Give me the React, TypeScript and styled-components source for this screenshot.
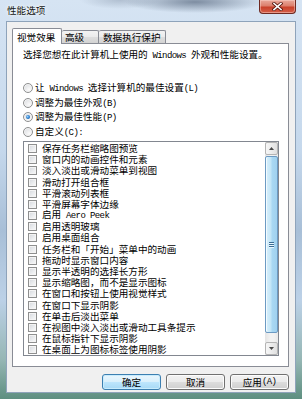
import React from "react";
import styled, { createGlobalStyle } from "styled-components";

const GlobalStyle = createGlobalStyle`
  html, body { margin: 0; padding: 0; }
  body { width: 302px; height: 399px; overflow: hidden; background: #bcd2ea; }
  * { box-sizing: border-box; }
`;

const Window = styled.div`
  width: 302px;
  height: 399px;
  display: flex;
  flex-direction: column;
  padding: 0 6px 6px 6px;
  font-family: "Noto Sans CJK SC", sans-serif;
  font-size: 9.6px;
  color: #000;
  background:
    radial-gradient(ellipse 70px 11px at 195px 2px, rgba(96, 112, 134, 0.75), rgba(96, 112, 134, 0)),
    radial-gradient(ellipse 40px 9px at 120px 0px, rgba(140, 155, 175, 0.5), rgba(140, 155, 175, 0)),
    linear-gradient(
      to bottom,
      #d6e4f3 0px,
      #c5d8ec 150px,
      #a8bfd7 230px,
      #bcd1e7 300px,
      #95b6b4 360px,
      #5e8f80 399px
    );
`;

const TitleBar = styled.div`
  height: 21px;
  flex: none;
  display: flex;
  justify-content: space-between;
  align-items: flex-start;
`;

const Title = styled.div`
  margin-top: 4px;
  padding-left: 1px;
  line-height: 12px;
  color: #141414;
  text-shadow: 0 0 5px rgba(255, 255, 255, 0.9), 0 0 2px rgba(255, 255, 255, 0.9);
`;

const CloseButton = styled.div`
  width: 37px;
  height: 14px;
  border: 1px solid #6e2a22;
  border-top: none;
  border-radius: 0 0 4px 4px;
  background: linear-gradient(to bottom, #e9a99b 0%, #dc7f6c 45%, #c9412a 55%, #d4604a 100%);
  box-shadow: inset 0 0 0 1px rgba(255, 220, 210, 0.45);
  display: flex;
  align-items: center;
  justify-content: center;
`;

const Client = styled.div`
  flex: 1;
  background: #f0f0f0;
  border: 1px solid #8ea3ba;
  display: flex;
  flex-direction: column;
  padding: 6px 0 0 5px;
`;

const TabStrip = styled.div`
  display: flex;
  height: 16px;
  margin-bottom: -1px;
  position: relative;
  z-index: 1;
`;

const Tab = styled.div<{ $active?: boolean; $w: number; $pl: number; $noLeft?: boolean }>`
  width: ${(p) => p.$w}px;
  padding-left: ${(p) => p.$pl}px;
  display: flex;
  align-items: center;
  white-space: nowrap;
  border: 1px solid #898c95;
  border-bottom: none;
  border-left-width: ${(p) => (p.$noLeft ? 0 : 1)}px;
  border-radius: 2px 2px 0 0;
  height: ${(p) => (p.$active ? 16 : 13)}px;
  margin-top: ${(p) => (p.$active ? 0 : 2)}px;
  background: ${(p) =>
    p.$active
      ? "#ffffff"
      : "linear-gradient(to bottom, #f3f3f3 0%, #ebebeb 50%, #dedede 50%, #d3d3d3 100%)"};
  line-height: 12px;
`;

const Panel = styled.div`
  width: 277px;
  height: 324px;
  border: 1px solid #898c95;
  background: #ffffff;
  display: flex;
  flex-direction: column;
  padding: 4px 0 0 10px;
`;

const Description = styled.div`
  height: 12px;
  line-height: 12px;
  white-space: nowrap;
`;

const Lat = styled.span`
  font-family: "Liberation Mono", monospace;
  font-size: 9px;
  letter-spacing: -0.6px;
`;

const RadioGroup = styled.div`
  margin-top: 21px;
  display: flex;
  flex-direction: column;
`;

const RadioRow = styled.div`
  height: 14.6px;
  display: flex;
  align-items: center;
  gap: 2px;
  line-height: 12px;
  white-space: nowrap;
`;

const RadioCircle = styled.span<{ $checked?: boolean }>`
  width: 10px;
  height: 10px;
  flex: none;
  border-radius: 50%;
  border: 1px solid #8e8f8f;
  background: radial-gradient(circle at 65% 70%, #fbfbfb 0%, #e6e7e9 55%, #c9ccd1 100%);
  box-shadow: inset 0 0 0 1px #f6f6f6;
  display: flex;
  align-items: center;
  justify-content: center;
  &::after {
    content: "";
    display: ${(p) => (p.$checked ? "block" : "none")};
    width: 4px;
    height: 4px;
    border-radius: 50%;
    background: radial-gradient(circle at 40% 40%, #9fd6ff 0%, #2a7fcf 50%, #164f8a 100%);
  }
`;

const ListBox = styled.div`
  margin-top: 2px;
  width: 256px;
  height: 215px;
  border: 1px solid #828790;
  background: #fff;
  display: flex;
`;

const Items = styled.div`
  flex: 1;
  display: flex;
  flex-direction: column;
  padding: 0.5px 0 0 4px;
`;

const ItemRow = styled.div`
  height: 11.2px;
  display: flex;
  align-items: center;
  gap: 5px;
  line-height: 11px;
  white-space: nowrap;
`;

const CheckBox = styled.span`
  width: 9px;
  height: 9px;
  flex: none;
  border: 1px solid #8e8f8f;
  background: linear-gradient(135deg, #d4d7dc 0%, #eceef0 60%, #fafafa 100%);
  box-shadow: inset 0 0 0 1px #f4f4f4;
`;

const ScrollBar = styled.div`
  width: 13px;
  flex: none;
  display: flex;
  flex-direction: column;
  background: linear-gradient(to right, #e4e4e4, #f2f2f2 40%, #f2f2f2 70%, #e8e8e8);
`;

const ArrowButton = styled.div`
  height: 13px;
  flex: none;
  border: 1px solid #b4b4b4;
  border-radius: 2px;
  background: linear-gradient(to right, #f7f7f7 0%, #ececec 50%, #e0e0e0 100%);
  display: flex;
  align-items: center;
  justify-content: center;
`;

const Track = styled.div`
  flex: 1;
  display: flex;
  flex-direction: column;
`;

const Thumb = styled.div`
  margin-top: 1px;
  height: 177px;
  border: 1px solid #6c9ac3;
  border-radius: 2px;
  background: linear-gradient(to right, #d9f0fc 0%, #c2e5f7 45%, #a9d8f3 55%, #a0d1ef 100%);
  box-shadow: inset 1px 0 0 #f2fbff;
  display: flex;
  align-items: center;
  justify-content: center;
`;

const Grip = styled.div`
  width: 5px;
  display: flex;
  flex-direction: column;
  gap: 1px;
  & > span {
    display: block;
    height: 1px;
    background: #3a6d96;
    box-shadow: 0 1px 0 #e9f6fd;
  }
`;

const ButtonRow = styled.div`
  width: 277px;
  margin-top: 7px;
  display: flex;
  justify-content: flex-end;
  gap: 5px;
`;

const Button = styled.div<{ $default?: boolean }>`
  width: 59px;
  height: 16px;
  border: 1px solid ${(p) => (p.$default ? "#3c7fb1" : "#707070")};
  border-radius: 3px;
  background: ${(p) =>
    p.$default
      ? "linear-gradient(to bottom, #eaf6fd 0%, #d9f0fc 50%, #bee6fd 50%, #a7d9f5 100%)"
      : "linear-gradient(to bottom, #f2f2f2 0%, #ebebeb 50%, #dddddd 50%, #cfcfcf 100%)"};
  box-shadow: inset 0 0 0 1px ${(p) => (p.$default ? "#c8ecfd" : "#fcfcfc")};
  display: flex;
  align-items: center;
  justify-content: center;
  line-height: 12px;
  white-space: nowrap;
`;

const items: React.ReactNode[] = [
  "保存任务栏缩略图预览",
  "窗口内的动画控件和元素",
  "淡入淡出或滑动菜单到视图",
  "滑动打开组合框",
  "平滑滚动列表框",
  "平滑屏幕字体边缘",
  <>
    启用<Lat> Aero Peek</Lat>
  </>,
  "启用透明玻璃",
  "启用桌面组合",
  "任务栏和「开始」菜单中的动画",
  "拖动时显示窗口内容",
  "显示半透明的选择长方形",
  "显示缩略图，而不是显示图标",
  "在窗口和按钮上使用视觉样式",
  "在窗口下显示阴影",
  "在单击后淡出菜单",
  "在视图中淡入淡出或滑动工具条提示",
  "在鼠标指针下显示阴影",
  "在桌面上为图标标签使用阴影",
];

export default function App() {
  return (
    <>
      <GlobalStyle />
      <Window>
        <TitleBar>
          <Title>性能选项</Title>
          <CloseButton>
            <svg width="11" height="9" viewBox="0 0 11 9">
              <path d="M2 1.5 L9 7.5 M9 1.5 L2 7.5" stroke="#5a1a12" strokeWidth="3.2" strokeLinecap="square" />
              <path d="M2 1.5 L9 7.5 M9 1.5 L2 7.5" stroke="#ffffff" strokeWidth="1.6" strokeLinecap="square" />
            </svg>
          </CloseButton>
        </TitleBar>
        <Client>
          <TabStrip>
            <Tab $active $w={50} $pl={4}>视觉效果</Tab>
            <Tab $w={37} $pl={3} $noLeft>高级</Tab>
            <Tab $w={67} $pl={4} $noLeft>数据执行保护</Tab>
          </TabStrip>
          <Panel>
            <Description>
              选择您想在此计算机上使用的<Lat> Windows </Lat>外观和性能设置。
            </Description>
            <RadioGroup>
              <RadioRow>
                <RadioCircle />
                <span>
                  让<Lat> Windows </Lat>选择计算机的最佳设置<Lat>(L)</Lat>
                </span>
              </RadioRow>
              <RadioRow>
                <RadioCircle />
                <span>
                  调整为最佳外观<Lat>(B)</Lat>
                </span>
              </RadioRow>
              <RadioRow>
                <RadioCircle $checked />
                <span>
                  调整为最佳性能<Lat>(P)</Lat>
                </span>
              </RadioRow>
              <RadioRow>
                <RadioCircle />
                <span>
                  自定义<Lat>(C):</Lat>
                </span>
              </RadioRow>
            </RadioGroup>
            <ListBox>
              <Items>
                {items.map((it, i) => (
                  <ItemRow key={i}>
                    <CheckBox />
                    <span>{it}</span>
                  </ItemRow>
                ))}
              </Items>
              <ScrollBar>
                <ArrowButton>
                  <svg width="5" height="3" viewBox="0 0 5 3">
                    <path d="M0 3 L2.5 0 L5 3 Z" fill="#4a4a4a" />
                  </svg>
                </ArrowButton>
                <Track>
                  <Thumb>
                    <Grip>
                      <span />
                      <span />
                      <span />
                    </Grip>
                  </Thumb>
                </Track>
                <ArrowButton>
                  <svg width="5" height="3" viewBox="0 0 5 3">
                    <path d="M0 0 L2.5 3 L5 0 Z" fill="#4a4a4a" />
                  </svg>
                </ArrowButton>
              </ScrollBar>
            </ListBox>
          </Panel>
          <ButtonRow>
            <Button $default>确定</Button>
            <Button>取消</Button>
            <Button>
              应用<Lat>(A)</Lat>
            </Button>
          </ButtonRow>
        </Client>
      </Window>
    </>
  );
}
